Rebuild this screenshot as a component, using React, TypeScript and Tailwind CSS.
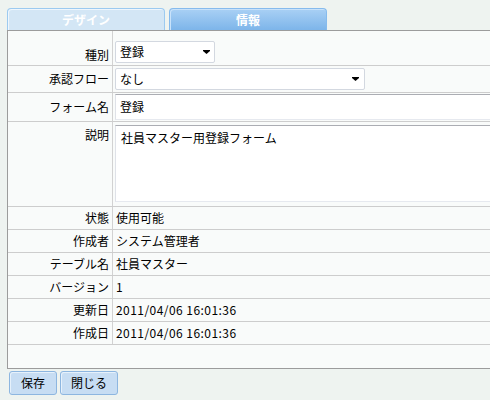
import React from "react";

const Arrow = () => (
  <svg width="7" height="4" viewBox="0 0 7 4" className="block">
    <rect x="0" y="0" width="7" height="1" fill="#000" />
    <polygon points="0,1 7,1 3.5,4" fill="#000" />
  </svg>
);

const Label = ({ children, top }: { children: React.ReactNode; top?: boolean }) => (
  <div
    className={`w-[105px] shrink-0 border-r border-[#d2d2d2] pr-[3px] text-right flex justify-end ${
      top ? "items-start pt-[5px]" : "items-center"
    }`}
  >
    {children}
  </div>
);

const TextRow = ({ label, value, wide }: { label: string; value: string; wide?: boolean }) => (
  <div className="flex h-[23px] border-b border-[#cdcdcd]">
    <Label>{label}</Label>
    <div className={`flex items-center pl-[3px] ${wide ? "tracking-[0.45px]" : ""}`}>{value}</div>
  </div>
);

export default function App() {
  return (
    <div
      className="w-[490px] h-[400px] overflow-hidden bg-[#eef3f0] text-[12px] leading-[16px] text-black"
      style={{ fontFamily: '"Noto Sans CJK JP", "Noto Sans", sans-serif' }}
    >
      {/* tabs */}
      <div className="flex gap-[4px] pl-[7px] pt-[8px] h-[30px]">
        <div className="w-[158px] h-[22px] rounded-t-[4px] border border-b-0 border-[#9ccaf0] bg-[#d3e6f5] shadow-[inset_1px_1px_0_#eef6fd] flex items-center justify-center text-white font-bold">
          デザイン
        </div>
        <div className="w-[158px] h-[22px] rounded-t-[4px] border border-b-0 border-[#86bbed] bg-gradient-to-b from-[#a9d0f4] to-[#7db5ea] shadow-[inset_1px_1px_0_#c8e2fa] flex items-center justify-center text-white font-bold">
          情報
        </div>
      </div>

      {/* panel */}
      <div className="ml-[7px] w-[540px] border-l border-t border-b border-[#9c9c9c] bg-[#f9fbfa] pb-[23px]">
        {/* 種別 */}
        <div className="flex h-[35px] border-b border-[#cdcdcd]">
          <div className="w-[105px] shrink-0 border-r border-[#d2d2d2] pr-[3px] text-right pt-[16px]">種別</div>
          <div className="pl-[2px] pt-[10px]">
            <div className="w-[100px] h-[22px] rounded-[2px] border border-[#d3d8e0] bg-white flex items-center justify-between pl-[4px] pr-[4px]">
              <span>登録</span>
              <Arrow />
            </div>
          </div>
        </div>
        {/* 承認フロー */}
        <div className="flex h-[27px] border-b border-[#cdcdcd]">
          <Label>承認フロー</Label>
          <div className="pl-[2px] pt-[2px]">
            <div className="w-[250px] h-[22px] rounded-[2px] border border-[#d3d8e0] bg-white flex items-center justify-between pl-[4px] pr-[5px]">
              <span>なし</span>
              <Arrow />
            </div>
          </div>
        </div>
        {/* フォーム名 */}
        <div className="flex h-[29px] border-b border-[#cdcdcd]">
          <Label>フォーム名</Label>
          <div className="pl-[2px] pt-[1px]">
            <div className="w-[420px] h-[26px] border border-t-[#abadb3] border-x-[#dfe2e8] border-b-[#e6e9ef] bg-white flex items-center pl-[4px]">
              登録
            </div>
          </div>
        </div>
        {/* 説明 */}
        <div className="flex h-[85px] border-b border-[#cdcdcd]">
          <Label top>説明</Label>
          <div className="pl-[2px] pt-[3px]">
            <div className="w-[420px] h-[77px] border border-t-[#abadb3] border-x-[#dfe2e8] border-b-[#e6e9ef] bg-white pl-[5px] pt-[4px]">
              社員マスター用登録フォーム
            </div>
          </div>
        </div>
        <TextRow label="状態" value="使用可能" />
        <TextRow label="作成者" value="システム管理者" />
        <TextRow label="テーブル名" value="社員マスター" />
        <TextRow label="バージョン" value="1" />
        <TextRow label="更新日" value="2011/04/06 16:01:36" wide />
        <TextRow label="作成日" value="2011/04/06 16:01:36" wide />
      </div>

      {/* buttons */}
      <div className="flex gap-[3px] pl-[9px] pt-[2px]">
        <button className="w-[48px] h-[24px] rounded-[3px] border border-[#8db6e0] bg-[#c7ddf3] shadow-[inset_1px_1px_0_#e6f1fb] flex items-center justify-center">
          保存
        </button>
        <button className="w-[58px] h-[24px] rounded-[3px] border border-[#8db6e0] bg-[#c7ddf3] shadow-[inset_1px_1px_0_#e6f1fb] flex items-center justify-center">
          閉じる
        </button>
      </div>
    </div>
  );
}
